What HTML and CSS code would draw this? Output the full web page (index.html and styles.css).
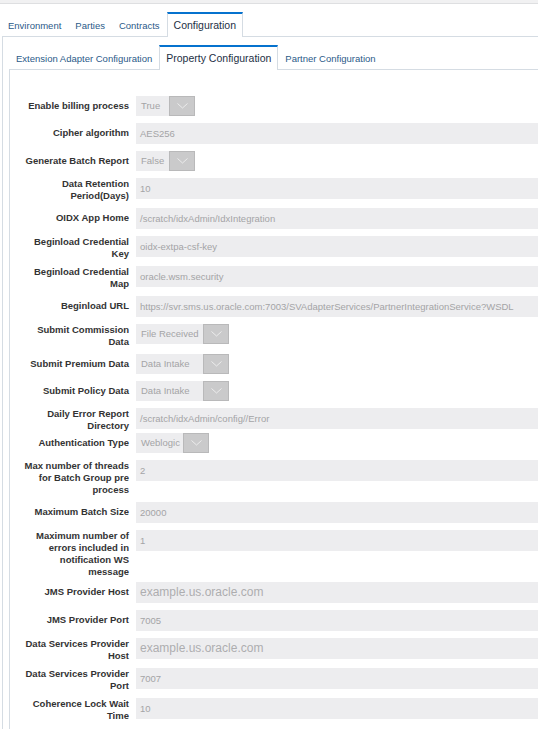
FILE: index.html
```html
<!DOCTYPE html>
<html lang="en">
<head>
<meta charset="utf-8">
<title>Property Configuration</title>
<link rel="stylesheet" href="styles.css">
</head>
<body>
<div class="topbar"></div>
<div class="tabs tabs--outer">
  <div class="tab">Environment</div>
  <div class="tab">Parties</div>
  <div class="tab">Contracts</div>
  <div class="tab tab--active">Configuration</div>
</div>
<div class="panel panel--outer">
  <div class="tabs">
    <div class="tab tab--sub">Extension Adapter Configuration</div>
    <div class="tab tab--sub tab--active">Property Configuration</div>
    <div class="tab tab--sub">Partner Configuration</div>
  </div>
  <div class="panel panel--inner">
    <div class="form">
      <div class="row">
        <div class="lbl">Enable billing process</div>
        <div class="select"><span class="select__val w33">True</span><span class="select__btn"><svg width="11" height="6" viewBox="0 0 11 6"><polyline points="0.5,0.5 5.5,5 10.5,0.5" fill="none" stroke="#ececec" stroke-width="1"/></svg></span></div>
      </div>
      <div class="row">
        <div class="lbl">Cipher algorithm</div>
        <div class="input">AES256</div>
      </div>
      <div class="row">
        <div class="lbl">Generate Batch Report</div>
        <div class="select"><span class="select__val w33">False</span><span class="select__btn"><svg width="11" height="6" viewBox="0 0 11 6"><polyline points="0.5,0.5 5.5,5 10.5,0.5" fill="none" stroke="#ececec" stroke-width="1"/></svg></span></div>
      </div>
      <div class="row">
        <div class="lbl lbl--wrap">Data Retention<br>Period(Days)</div>
        <div class="input">10</div>
      </div>
      <div class="row">
        <div class="lbl">OIDX App Home</div>
        <div class="input">/scratch/idxAdmin/IdxIntegration</div>
      </div>
      <div class="row">
        <div class="lbl lbl--wrap">Beginload Credential<br>Key</div>
        <div class="input">oidx-extpa-csf-key</div>
      </div>
      <div class="row">
        <div class="lbl lbl--wrap">Beginload Credential<br>Map</div>
        <div class="input">oracle.wsm.security</div>
      </div>
      <div class="row">
        <div class="lbl">Beginload URL</div>
        <div class="input">https://svr.sms.us.oracle.com:7003/SVAdapterServices/PartnerIntegrationService?WSDL</div>
      </div>
      <div class="row">
        <div class="lbl lbl--wrap">Submit Commission<br>Data</div>
        <div class="select"><span class="select__val w67">File Received</span><span class="select__btn"><svg width="11" height="6" viewBox="0 0 11 6"><polyline points="0.5,0.5 5.5,5 10.5,0.5" fill="none" stroke="#ececec" stroke-width="1"/></svg></span></div>
      </div>
      <div class="row">
        <div class="lbl">Submit Premium Data</div>
        <div class="select"><span class="select__val w67">Data Intake</span><span class="select__btn"><svg width="11" height="6" viewBox="0 0 11 6"><polyline points="0.5,0.5 5.5,5 10.5,0.5" fill="none" stroke="#ececec" stroke-width="1"/></svg></span></div>
      </div>
      <div class="row">
        <div class="lbl">Submit Policy Data</div>
        <div class="select"><span class="select__val w67">Data Intake</span><span class="select__btn"><svg width="11" height="6" viewBox="0 0 11 6"><polyline points="0.5,0.5 5.5,5 10.5,0.5" fill="none" stroke="#ececec" stroke-width="1"/></svg></span></div>
      </div>
      <div class="row row--tight">
        <div class="lbl lbl--wrap">Daily Error Report<br>Directory</div>
        <div class="input">/scratch/idxAdmin/config//Error</div>
      </div>
      <div class="row">
        <div class="lbl">Authentication Type</div>
        <div class="select"><span class="select__val w47">Weblogic</span><span class="select__btn"><svg width="11" height="6" viewBox="0 0 11 6"><polyline points="0.5,0.5 5.5,5 10.5,0.5" fill="none" stroke="#ececec" stroke-width="1"/></svg></span></div>
      </div>
      <div class="row">
        <div class="lbl lbl--wrap">Max number of threads<br>for Batch Group pre<br>process</div>
        <div class="input">2</div>
      </div>
      <div class="row">
        <div class="lbl">Maximum Batch Size</div>
        <div class="input">20000</div>
      </div>
      <div class="row">
        <div class="lbl lbl--wrap lbl--long">Maximum number of<br>errors included in<br>notification WS<br>message</div>
        <div class="input">1</div>
      </div>
      <div class="row">
        <div class="lbl">JMS Provider Host</div>
        <div class="input input--large">example.us.oracle.com</div>
      </div>
      <div class="row">
        <div class="lbl">JMS Provider Port</div>
        <div class="input">7005</div>
      </div>
      <div class="row">
        <div class="lbl lbl--wrap">Data Services Provider<br>Host</div>
        <div class="input input--large">example.us.oracle.com</div>
      </div>
      <div class="row">
        <div class="lbl lbl--wrap">Data Services Provider<br>Port</div>
        <div class="input">7007</div>
      </div>
      <div class="row">
        <div class="lbl lbl--wrap">Coherence Lock Wait<br>Time</div>
        <div class="input">10</div>
      </div>
    </div>
  </div>
</div>
</body>
</html>
```

FILE: styles.css
```css
html, body {
  margin: 0;
  padding: 0;
  background: #ffffff;
  overflow: hidden;
  height: 100%;
}

body {
  font-family: "Liberation Sans", Arial, sans-serif;
  font-size: 9.5px;
  color: #333333;
  display: flex;
  flex-direction: column;
}

.topbar {
  height: 3px;
  background: #f1f1f2;
  border-bottom: 1px solid #dedfe1;
  flex: none;
}

.tabs {
  display: flex;
  align-items: flex-end;
  position: relative;
  z-index: 1;
  flex: none;
}

.tabs--outer {
  padding: 8px 0 0 1px;
}

.tab {
  height: 23px;
  line-height: 23px;
  padding: 0 6px;
  border: 1px solid transparent;
  border-top: 2px solid transparent;
  border-bottom: none;
  color: #2b5a89;
  white-space: nowrap;
  margin-bottom: -1px;
}

.tab--active {
  background: #ffffff;
  border-color: #d5dce3;
  border-top-color: #0572ce;
  color: #1d2f45;
  font-size: 10.5px;
}

.panel {
  border-top: 1px solid #d5dce3;
  border-left: 1px solid #d5dce3;
}

.panel--outer {
  margin-left: 2px;
  padding: 8px 0 0 6px;
  flex: 1;
  display: flex;
  flex-direction: column;
}

.panel--inner {
  padding: 26px 0 0 14px;
  flex: 1;
}

.form {
  display: flex;
  flex-direction: column;
  gap: 7px;
}

.row {
  display: flex;
  align-items: flex-start;
}

.row--tight {
  margin-bottom: -5px;
}

.lbl {
  width: 105px;
  flex: none;
  margin-right: 7px;
  text-align: right;
  font-weight: bold;
  line-height: 12px;
  padding-top: 4px;
  color: #333333;
  white-space: nowrap;
}

.lbl--wrap {
  padding-top: 0;
  margin-bottom: -1px;
}

.lbl--long {
  margin-bottom: -3px;
}

.input {
  flex: 1;
  min-width: 0;
  height: 21px;
  line-height: 21px;
  padding: 0 4px;
  background: #ededef;
  color: #a4a4a6;
  white-space: nowrap;
  overflow: hidden;
}

.input--large {
  font-size: 12px;
  color: #adadaf;
}

.select {
  display: flex;
  height: 20px;
}

.select__val {
  height: 20px;
  line-height: 20px;
  padding-left: 5px;
  box-sizing: border-box;
  background: #ededef;
  color: #a4a4a6;
  white-space: nowrap;
}

.w33 { width: 33px; }
.w47 { width: 47px; }
.w67 { width: 67px; }

.select__btn {
  width: 26px;
  height: 20px;
  box-sizing: border-box;
  background: #cacacb;
  border: 1px solid #b9b9ba;
  display: flex;
  align-items: center;
  justify-content: center;
}
```
